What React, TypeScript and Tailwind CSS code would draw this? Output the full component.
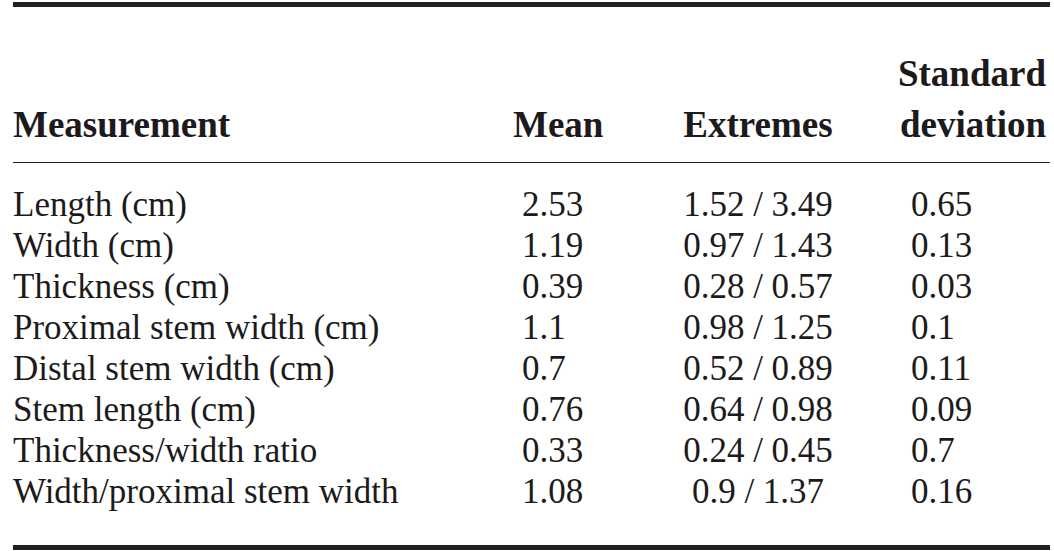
import React from 'react';

const ROWS: [string, string, string, string][] = [
  ['Length (cm)', '2.53', '1.52 / 3.49', '0.65'],
  ['Width (cm)', '1.19', '0.97 / 1.43', '0.13'],
  ['Thickness (cm)', '0.39', '0.28 / 0.57', '0.03'],
  ['Proximal stem width (cm)', '1.1', '0.98 / 1.25', '0.1'],
  ['Distal stem width (cm)', '0.7', '0.52 / 0.89', '0.11'],
  ['Stem length (cm)', '0.76', '0.64 / 0.98', '0.09'],
  ['Thickness/width ratio', '0.33', '0.24 / 0.45', '0.7'],
  ['Width/proximal stem width', '1.08', '0.9 / 1.37', '0.16'],
];

const App: React.FC = () => {
  return (
    <div className="w-[1054px] h-[551px] bg-white pt-[2px] pl-[13px] pr-[4px] text-[#1c1a1b] font-['Liberation_Serif','Times_New_Roman',serif] overflow-hidden">
      {/* Top rule */}
      <div className="h-[5px] bg-[#231f20]" />

      {/* Header */}
      <div className="flex items-end pt-[41px] text-[37px] leading-[51px] font-bold">
        <div className="w-[496px]">Measurement</div>
        <div className="w-[151px] pl-[4px]">Mean</div>
        <div className="w-[196px] text-center">Extremes</div>
        <div className="flex-1 text-right pr-[4px]">
          Standard
          <br />
          deviation
        </div>
      </div>

      <div className="mt-[12px] h-px bg-[#231f20]" />

      {/* Body */}
      <div className="pt-[21px] text-[35px] leading-[41px]">
        {ROWS.map(([label, mean, extremes, sd]) => (
          <div key={label} className="flex">
            <div className="w-[496px] whitespace-nowrap">{label}</div>
            <div className="w-[151px] pl-[13px]">{mean}</div>
            <div className="w-[196px] text-center whitespace-nowrap">{extremes}</div>
            <div className="flex-1 pl-[55px]">{sd}</div>
          </div>
        ))}
      </div>

      {/* Bottom rule */}
      <div className="mt-[33px] h-[5px] bg-[#231f20]" />
    </div>
  );
};

export default App;
